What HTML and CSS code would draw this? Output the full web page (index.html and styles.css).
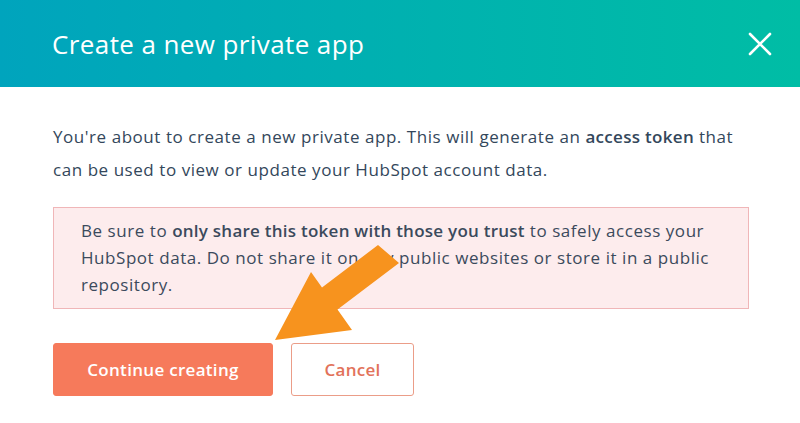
FILE: index.html
```html
<!DOCTYPE html>
<html lang="en">
<head>
  <meta charset="UTF-8" />
  <title>Create a new private app</title>
  <link rel="stylesheet" href="styles.css">
</head>
<body>
  <div class="dialog">
    <header class="dialog-header">
      <h1>Create a new private app</h1>
      <button class="close-btn" aria-label="Close">
        <svg width="24" height="24" viewBox="0 0 24 24">
          <path d="M2 2 L22 22 M22 2 L2 22" stroke="#fff" stroke-width="2.6" stroke-linecap="round" fill="none"/>
        </svg>
      </button>
    </header>

    <main class="dialog-body">
      <p class="intro">You're about to create a new private app. This will generate an <strong>access token</strong> that can be used to view or update your HubSpot account data.</p>

      <div class="alert">
        Be sure to <strong>only share this token with those you trust</strong> to safely access your HubSpot data. Do not share it on any public websites or store it in a public repository.
      </div>

      <div class="actions">
        <button class="btn btn-primary">Continue creating</button>
        <button class="btn btn-secondary">Cancel</button>
      </div>
    </main>

    <!-- Annotation arrow drawn over the dialog -->
    <svg class="pointer" width="800" height="423" viewBox="0 0 800 423">
      <polygon points="275,340 311,272 322,287.5 378,245 399,263 337.5,309.6 352,330" fill="#f7931e"/>
    </svg>
  </div>
</body>
</html>
```

FILE: styles.css
```css
body {
  margin: 0;
  font-family: 'Open Sans', 'Noto Sans', sans-serif;
  color: #33475b;
  background: #fff;
}

.dialog {
  position: relative;
  width: 800px;
  height: 423px;
  overflow: hidden;
}

.dialog-header {
  height: 87px;
  display: flex;
  align-items: center;
  justify-content: space-between;
  padding: 0 28px 0 52px;
  background: linear-gradient(90deg, #00a4bd 0%, #00b1b0 50%, #00bda5 100%);
}

.dialog-header h1 {
  margin: 0;
  font-size: 26px;
  font-weight: 500;
  letter-spacing: 0.4px;
  color: #fff;
}

.close-btn {
  border: none;
  background: none;
  padding: 0;
  display: flex;
  cursor: pointer;
}

.dialog-body {
  padding: 33px 51px 0 53px;
}

.intro {
  margin: 0;
  font-size: 17px;
  line-height: 33px;
  letter-spacing: 0.55px;
}

.intro strong {
  font-weight: 600;
  letter-spacing: 0.3px;
}

.alert {
  margin-top: 21px;
  padding: 9px 27px 10px 27px;
  background: #fdeced;
  border: 1px solid #f0b6b8;
  font-size: 17px;
  line-height: 27px;
  letter-spacing: 0.55px;
  color: #3b4a5c;
}

.alert strong {
  font-weight: 600;
  letter-spacing: 0.25px;
}

.actions {
  display: flex;
  gap: 18px;
  margin-top: 34px;
}

.btn {
  height: 53px;
  font-family: 'Open Sans', 'Noto Sans', sans-serif;
  font-size: 17px;
  font-weight: 600;
  letter-spacing: 0.3px;
  border-radius: 3px;
  cursor: pointer;
}

.btn-primary {
  width: 220px;
  background: #f67a5b;
  border: 1px solid #f67a5b;
  color: #fff;
}

.btn-secondary {
  width: 123px;
  background: #fff;
  border: 1px solid #eb9d88;
  color: #e2725a;
}

.pointer {
  position: absolute;
  top: 0;
  left: 0;
  pointer-events: none;
}
```
